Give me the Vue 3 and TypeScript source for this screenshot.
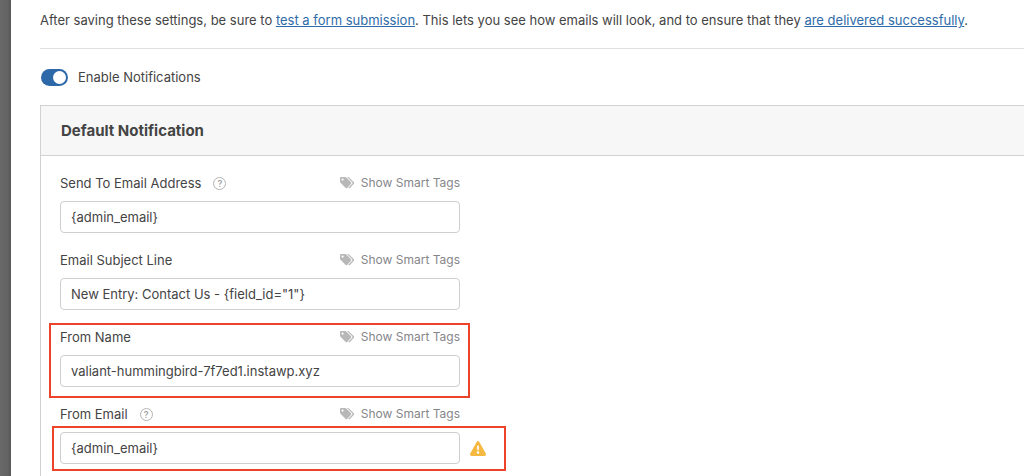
<script setup lang="ts">
import { reactive, ref } from 'vue'

interface Field {
  id: string
  label: string
  value: string
  help?: boolean
  warning?: boolean
  highlight?: 'field' | 'control'
}

const enabled = ref(true)

const fields = reactive<Field[]>([
  { id: 'send-to', label: 'Send To Email Address', value: '{admin_email}', help: true },
  { id: 'subject', label: 'Email Subject Line', value: 'New Entry: Contact Us - {field_id="1"}' },
  { id: 'from-name', label: 'From Name', value: 'valiant-hummingbird-7f7ed1.instawp.xyz', highlight: 'field' },
  { id: 'from-email', label: 'From Email', value: '{admin_email}', help: true, warning: true, highlight: 'control' },
])
</script>

<template>
  <div class="page">
    <div class="edge"></div>
    <main class="content">
      <p class="intro">
        After saving these settings, be sure to <a href="#">test a form submission</a>. This lets you see how emails
        will look, and to ensure that they <a href="#">are delivered successfully</a>.
      </p>

      <div class="toggle-row">
        <input id="enable" v-model="enabled" class="switch" type="checkbox" role="switch" />
        <label for="enable">Enable Notifications</label>
      </div>

      <section class="panel">
        <h2 class="panel-head">Default Notification</h2>
        <div class="panel-body">
          <div v-for="field in fields" :key="field.id" class="field">
            <div class="field-head">
              <label :for="field.id">{{ field.label }}</label>
              <button v-if="field.help" class="help" type="button">?</button>
              <button class="tags" type="button">
                <svg width="15" height="12" viewBox="0 0 15 12" aria-hidden="true">
                  <path
                    fill-rule="evenodd"
                    d="M1 0H5.2Q5.8 0 6.3.5L11 5.3Q11.6 6 11 6.7L7.1 11Q6.4 11.7 5.7 11L.5 5.8Q0 5.2 0 4.6V1Q0 0 1 0ZM2.6 1.5a1.1 1.1 0 1 0 0 2.2a1.1 1.1 0 1 0 0-2.2Z"
                  />
                  <path d="M7 0H7.8Q8.5 0 9 .5L13.9 5.3Q14.5 6 13.9 6.7L10 11Q9.3 11.7 8.5 11L8.3 10.8L12.2 6.7Q12.8 6 12.2 5.3Z" />
                </svg>
                Show Smart Tags
              </button>
            </div>
            <div class="control">
              <input :id="field.id" v-model="field.value" type="text" />
              <svg v-if="field.warning" class="warning" width="16" height="15" viewBox="0 0 16 15" role="img" aria-label="Warning">
                <path
                  fill-rule="evenodd"
                  d="M6.8.8Q8-.8 9.2.8L15.8 12.6Q16.5 14.6 14.5 15H1.5Q-.5 14.6.2 12.6ZM7 4.8L7.3 9.2H8.7L9 4.8ZM8 10.2a1.3 1.3 0 1 0 0 2.6a1.3 1.3 0 1 0 0-2.6Z"
                />
              </svg>
              <span v-if="field.highlight === 'control'" class="mark mark-control"></span>
            </div>
            <span v-if="field.highlight === 'field'" class="mark mark-field"></span>
          </div>
        </div>
      </section>
    </main>
  </div>
</template>

<style>
body {
  margin: 0;
  background: #fff;
}
</style>

<style scoped>
.page {
  display: flex;
  min-height: 100vh;
  color: #444;
  font-family: Inter, "Liberation Sans", sans-serif;
  font-size: 13px;
  line-height: 20px;
}

.edge {
  flex: 0 0 11px;
  background: linear-gradient(to right, #696969, #636363 70%, #575757);
}

.content {
  display: flex;
  flex: 1;
  flex-direction: column;
  min-width: 0;
  padding-left: 29px;
}

.intro {
  margin: 0;
  padding: 10px 0 18px;
  border-bottom: 1px solid #dfdfdf;
}

a {
  color: #2e6ba8;
  text-decoration: underline;
}

.toggle-row {
  display: flex;
  align-items: center;
  gap: 10px;
  padding: 18px 0 18px 1px;
}

.switch {
  box-sizing: border-box;
  width: 27px;
  height: 17px;
  margin: 0;
  padding: 2px;
  border-radius: 9px;
  background: #a0a0a0;
  appearance: none;
}

.switch::before {
  display: block;
  width: 13px;
  height: 13px;
  border-radius: 50%;
  background: #fff;
  content: "";
}

.switch:checked {
  background: #2d69a8;
}

.switch:checked::before {
  margin-left: auto;
}

.panel {
  flex: 1;
  border-top: 1px solid #d2d2d2;
  border-left: 1px solid #d2d2d2;
}

.panel-head {
  margin: 0;
  padding: 15px 20px 14px;
  border-bottom: 1px solid #d2d2d2;
  background: #f7f7f7;
  font-size: 15px;
  font-weight: 700;
}

.panel-body {
  display: flex;
  flex-direction: column;
  gap: 17px;
  padding: 17px 19px 12px;
}

.field {
  position: relative;
  width: 100%;
  max-width: 400px;
}

.field-head {
  display: flex;
  align-items: center;
  margin-bottom: 8px;
}

button {
  padding: 0;
  border: 0;
  background: none;
  font-family: inherit;
  cursor: pointer;
}

.help {
  box-sizing: border-box;
  width: 13px;
  height: 13px;
  margin-left: 12px;
  border: 1px solid #b4b4b4;
  border-radius: 50%;
  color: #a6a6a6;
  font-size: 9px;
  font-weight: 600;
  line-height: 11px;
}

.tags {
  display: flex;
  align-items: center;
  gap: 6px;
  margin-left: auto;
  color: #86868a;
  font-size: 12px;
  line-height: 20px;
}

.tags svg {
  fill: #b8b8b8;
}

.control {
  position: relative;
  display: flex;
  align-items: center;
}

.control input {
  box-sizing: border-box;
  flex: 0 0 100%;
  width: 100%;
  height: 32px;
  padding: 0 10px;
  border: 1px solid #cfcfcf;
  border-radius: 4px;
  background: #fff;
  color: #444;
  font: inherit;
}

.warning {
  flex: none;
  margin-left: 10px;
  fill: #f5b942;
}

.mark {
  position: absolute;
  border: 2px solid #ee432b;
  pointer-events: none;
}

.mark-field {
  inset: -4px -10px -11px -11px;
}

.mark-control {
  inset: -6px -46px -7px -8px;
}
</style>
